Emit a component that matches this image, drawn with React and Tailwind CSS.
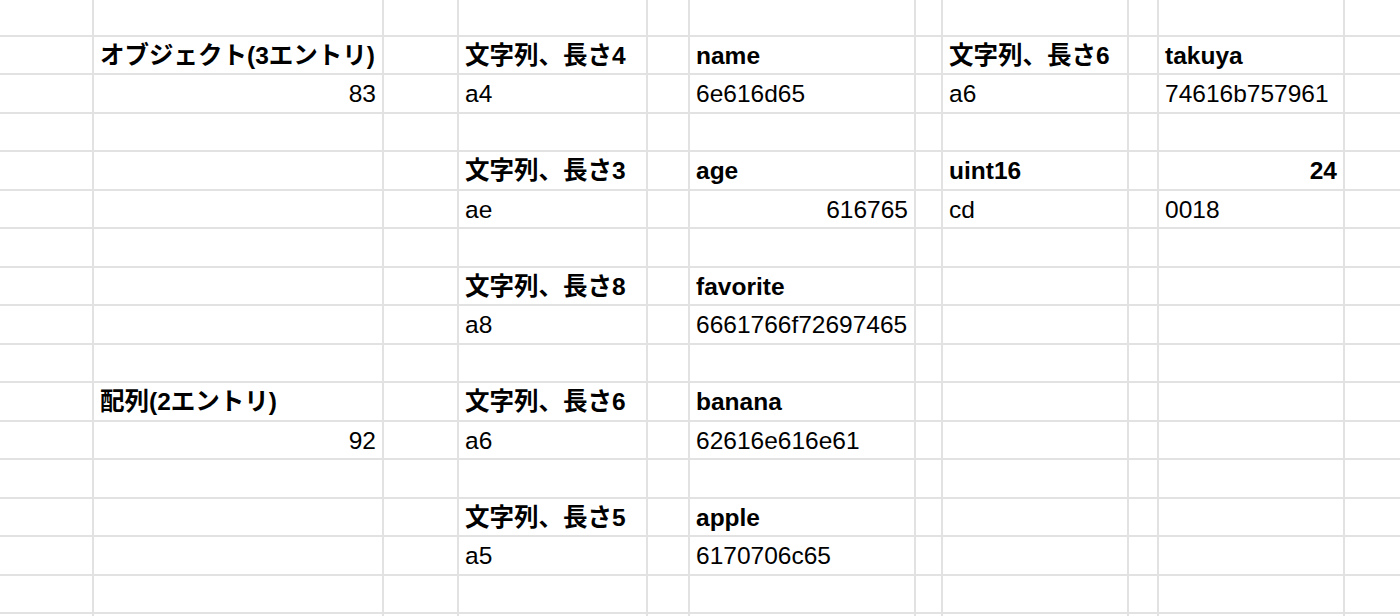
const COLS = "grid-cols-[92px_288px_73px_187px_40px_224px_25px_184px_28px_184px_55px]";
const ROWS =
    "grid-rows-[35px_36px_37px_36px_37px_36px_37px_36px_37px_36px_37px_36px_37px_36px_37px_36px_2px]";

// each row: [column, text, bold, right]
const data = [
    [],
    [
        [1, "オブジェクト(3エントリ)", true],
        [3, "文字列、長さ4", true],
        [5, "name", true],
        [7, "文字列、長さ6", true],
        [9, "takuya", true]
    ],
    [
        [1, "83", false, true],
        [3, "a4"],
        [5, "6e616d65"],
        [7, "a6"],
        [9, "74616b757961"]
    ],
    [],
    [
        [3, "文字列、長さ3", true],
        [5, "age", true],
        [7, "uint16", true],
        [9, "24", true, true]
    ],
    [
        [3, "ae"],
        [5, "616765", false, true],
        [7, "cd"],
        [9, "0018"]
    ],
    [],
    [
        [3, "文字列、長さ8", true],
        [5, "favorite", true]
    ],
    [
        [3, "a8"],
        [5, "6661766f72697465"]
    ],
    [],
    [
        [1, "配列(2エントリ)", true],
        [3, "文字列、長さ6", true],
        [5, "banana", true]
    ],
    [
        [1, "92", false, true],
        [3, "a6"],
        [5, "62616e616e61"]
    ],
    [],
    [
        [3, "文字列、長さ5", true],
        [5, "apple", true]
    ],
    [
        [3, "a5"],
        [5, "6170706c65"]
    ],
    [],
    []
];

function Cell({ text, bold, right }) {
    return (
        <div
            className={
                "bg-white flex items-center px-[6px] pt-[2px] text-[24.5px] leading-none text-black whitespace-nowrap overflow-hidden " +
                (bold ? "font-bold " : "") +
                (right ? "justify-end" : "justify-start")
            }
        >
            {text}
        </div>
    );
}

export default function App() {
    return (
        <div
            className={`grid ${COLS} ${ROWS} gap-[2px] bg-[#e2e2e2] w-[1400px] h-[616px] overflow-hidden`}
            style={{ fontFamily: '"Liberation Sans", Arial, "Noto Sans CJK JP", sans-serif' }}
        >
            {data.map((row, r) =>
                Array.from({ length: 11 }).map((_, c) => {
                    const hit = row.find(x => x[0] === c);
                    return (
                        <Cell
                            key={r + "-" + c}
                            text={hit ? hit[1] : ""}
                            bold={hit ? hit[2] : false}
                            right={hit ? hit[3] : false}
                        />
                    );
                })
            )}
        </div>
    );
}
